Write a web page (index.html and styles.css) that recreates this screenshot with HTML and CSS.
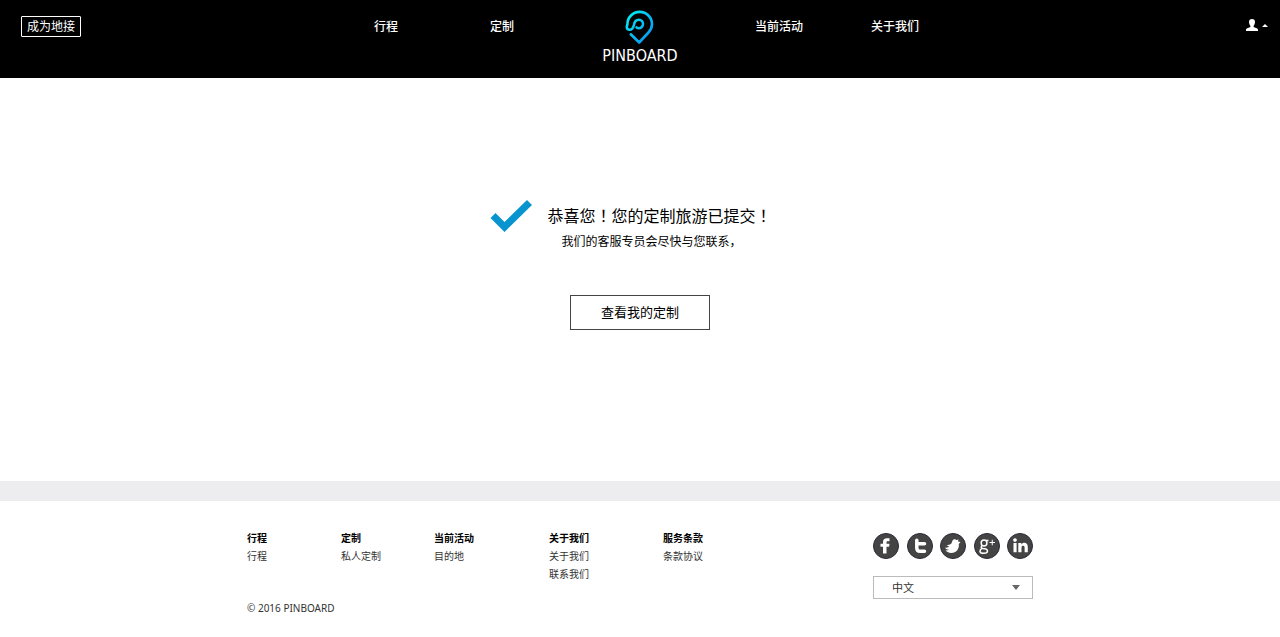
FILE: index.html
```html
<!DOCTYPE html>
<html lang="zh-CN">
<head>
<meta charset="utf-8">
<meta name="viewport" content="width=device-width, initial-scale=1">
<title>PINBOARD</title>
<link rel="stylesheet" href="styles.css">
</head>
<body>
<header class="header">
  <div class="side side-left">
    <button class="guide-button" type="button">成为地接</button>
    <nav class="nav nav-left">
      <a href="#">行程</a>
      <a href="#">定制</a>
    </nav>
  </div>
  <a class="logo" href="#">
    <svg class="logo-pin" viewBox="0 0 30 36" aria-hidden="true">
      <defs>
        <linearGradient id="pin" x1="0" y1="0" x2="1" y2="1">
          <stop offset="0" stop-color="#00f4f4"/>
          <stop offset="1" stop-color="#0a8cf0"/>
        </linearGradient>
      </defs>
      <path d="M5.800 24.300 L14.200 32.500 L23.500 22.500 C26 19.800 27 17.200 27 14.200 A12.300 12.300 0 0 0 2.400 14.200 C2.200 15.500 1.800 16.200 1.800 17 C1.800 19 3 19.800 4.700 19.800 C7.300 19.800 8.200 18 8.900 15 C9.600 11.500 11 9.800 13.800 9.800 A4.200 4.200 0 0 1 13.800 18.200 C12.700 18.200 12 17.900 11.500 17.400" fill="none" stroke="url(#pin)" stroke-width="2.600" stroke-linecap="round" stroke-linejoin="round"/>
    </svg>
    <span class="wordmark">PINBOARD</span>
  </a>
  <div class="side side-right">
    <nav class="nav nav-right">
      <a href="#">当前活动</a>
      <a href="#">关于我们</a>
    </nav>
    <button class="user-button" type="button" aria-label="用户">
      <svg class="user-icon" viewBox="0 0 12 12" aria-hidden="true">
        <path d="M6 0 C8 0 9 1.200 9 3 C9 5 8.200 6 7.600 6.800 V8 C9 8.900 11.400 9.100 12 10.400 V12 H0 V10.400 C.6 9.100 3 8.900 4.400 8 V6.800 C3.800 6 3 5 3 3 C3 1.200 4 0 6 0Z" fill="#fff"/>
      </svg>
      <svg class="caret-up" viewBox="0 0 6 3" aria-hidden="true"><path d="M0 3 L3 0 L6 3Z" fill="#fff"/></svg>
    </button>
  </div>
</header>

<main class="main">
  <section class="message">
    <svg class="check" viewBox="0 0 42 33" aria-hidden="true">
      <path d="M0.500 19 L5.500 14 L14.500 23 L37 1 L42 6 L14.500 33Z" fill="#0894cf"/>
    </svg>
    <div class="message-text">
      <h1>恭喜您<span class="mark" lang="zh-TW">！</span>您的定制旅游已提交<span class="mark" lang="zh-TW">！</span></h1>
      <p>我们的客服专员会尽快与您联系，</p>
    </div>
  </section>
  <button class="view-button" type="button">查看我的定制</button>
</main>

<footer class="footer">
  <div class="footer-inner">
    <div class="links">
      <section><h2>行程</h2><a href="#">行程</a></section>
      <section><h2>定制</h2><a href="#">私人定制</a></section>
      <section><h2>当前活动</h2><a href="#">目的地</a></section>
      <section><h2>关于我们</h2><a href="#">关于我们</a><a href="#">联系我们</a></section>
      <section><h2>服务条款</h2><a href="#">条款协议</a></section>
    </div>
    <div class="connect">
      <div class="social">
        <a href="#" aria-label="Facebook"><svg viewBox="0 0 26 26"><circle cx="13" cy="13" r="12.500"/><path d="M10 20.500 V13.800 H7.500 V10.700 H10 V9 C10 6.300 11.500 5.200 13.800 5.200 H16.500 V8.300 H14.800 C13.800 8.300 13.500 8.700 13.500 9.500 V10.700 H16.500 L16.100 13.800 H13.500 V20.500Z"/></svg></a>
        <a href="#" aria-label="Tumblr"><svg viewBox="0 0 26 26"><circle cx="13" cy="13" r="12.500"/><path d="M9.800 7.300 V15 Q9.800 18.300 13 18.300 H17.500 M9.800 10.800 H17.500" class="stroke"/></svg></a>
        <a href="#" aria-label="Twitter"><svg viewBox="0 0 26 26"><circle cx="13" cy="13" r="12.500"/><path d="M5 14.500 C7 15 8.300 14.300 9 13.500 L6.500 12 C8 12.200 9.500 12 10.800 11 C11.700 10.300 12 9 12.300 8 C13 6.300 15 5.800 16.500 7 L18.500 6.500 L18 8.500 L20.500 9 L18.800 11 C19.500 16 16 20 11.500 20 C8.500 20 6.300 18.500 5.500 17.300 C6.800 17.600 8 17.300 9 16.500 C7.200 16.800 5.500 16 5 14.500Z"/></svg></a>
        <a href="#" aria-label="Google+"><svg viewBox="0 0 26 26"><circle cx="13" cy="13" r="12.500"/><path class="thin" d="M10 7 C8 7 7.200 8.500 7.200 10 C7.200 12 8.300 13 10 13 C11.800 13 12.900 12 12.900 10 C12.900 8.500 12.200 7 10 7Z M12 7.500 H14.500 M8 12.500 C6.700 14 7 15.200 9 15.400 C12 15.600 13.500 16.200 13.500 18 C13.500 19.600 12 20.300 9.800 20.300 C7.500 20.300 6 19.600 6 18.200 C6 17 7 16 8 15.400"/><path class="plus" d="M15.500 9.500 H21 M18.250 6.750 V12.250"/></svg></a>
        <a href="#" aria-label="LinkedIn"><svg viewBox="0 0 26 26"><circle cx="13" cy="13" r="12.500"/><path d="M6.500 10 H9.600 V19.300 H6.500Z M11.300 10 H14.300 V11.400 C15.800 9.100 20.800 9 20.800 13.800 V19.300 H17.600 V14.500 C17.600 12 14.500 12 14.500 14.500 V19.300 H11.300Z M8 5.200 A1.800 1.800 0 1 1 7.990 5.200Z"/></svg></a>
      </div>
      <div class="language">
        <select aria-label="语言"><option>中文</option></select>
        <svg class="caret-down" viewBox="0 0 8 5" aria-hidden="true"><path d="M0 0 H8 L4 5Z" fill="#666"/></svg>
      </div>
    </div>
    <p class="copyright">© 2016 PINBOARD</p>
  </div>
</footer>
</body>
</html>
```

FILE: styles.css
```css
* { box-sizing: border-box; }

body {
  margin: 0;
  min-height: 100vh;
  background: #fff;
  color: #000;
  font-family: "Noto Sans CJK SC", sans-serif;
  font-size: 12px;
  line-height: 18px;
}

h1, h2, p { margin: 0; }
a { color: inherit; text-decoration: none; }
button, select { font: inherit; cursor: pointer; }
svg { display: block; }

.header {
  display: grid;
  grid-template-columns: 1fr 76px 1fr;
  min-height: 78px;
  background: #000;
  color: #fff;
}

.side {
  display: flex;
  justify-content: space-between;
  align-items: flex-start;
  padding-top: 16px;
}

.side-left { padding-left: 21px; }
.side-right { padding-right: 12px; }

.nav {
  display: flex;
  font-weight: 500;
  line-height: 20px;
}

.nav-left { gap: 92px; padding-right: 88px; }
.nav-right { gap: 68px; padding-left: 77px; }

.guide-button {
  width: 60px;
  height: 21px;
  padding: 0 0 2px;
  border: 1px solid #fff;
  border-radius: 1px;
  background: transparent;
  color: #fff;
  font-size: 12px;
  line-height: 16px;
}

.logo {
  display: flex;
  flex-direction: column;
  align-items: center;
  padding-top: 10px;
}

.logo-pin { width: 30px; height: 36px; }

.wordmark {
  font-family: "DejaVu Sans Condensed", "DejaVu Sans", sans-serif;
  font-size: 16px;
  line-height: 20px;
}

.user-button {
  display: flex;
  align-items: center;
  gap: 4px;
  padding: 3px 0;
  border: 0;
  background: transparent;
}

.user-icon { width: 12px; height: 12px; }
.caret-up { width: 6px; height: 3px; }

.main {
  display: flex;
  flex-direction: column;
  align-items: center;
  padding: 121px 0 151px;
}

.message {
  display: flex;
  gap: 15px;
  padding-right: 18px;
}

.check { width: 42px; height: 33px; }
.message-text { padding-top: 4px; }

.message-text h1 {
  font-size: 16px;
  font-weight: 400;
  line-height: 24px;
}

.mark { font-family: "Noto Sans CJK TC", sans-serif; }

.message-text p {
  padding: 5px 0 0 14px;
  line-height: 18px;
}

.view-button {
  width: 140px;
  height: 35px;
  margin-top: 45px;
  padding: 0 0 2px;
  border: 1px solid #444;
  background: #fff;
  color: #000;
  font-size: 13px;
}

.footer {
  border-top: 20px solid #ededef;
  color: #333;
  font-size: 10px;
}

.footer-inner {
  display: grid;
  grid-template-columns: 1fr 160px;
  max-width: 786px;
  margin: 0 auto;
  padding: 28px 0 20px;
}

.links {
  display: grid;
  grid-template-columns: 94px 93px 115px 114px auto;
}

.links h2 {
  color: #000;
  font-size: 10px;
  font-weight: 700;
  line-height: 18px;
}

.links a { display: block; }

.connect { padding-top: 4px; }
.social { display: flex; justify-content: space-between; }
.social svg { width: 26px; height: 26px; }
.social circle { fill: #444; stroke: #2c2838; }
.social path { fill: #fff; }
.social .stroke { fill: none; stroke: #fff; stroke-width: 3.500; stroke-linecap: round; }
.social .thin { fill: none; stroke: #fff; stroke-width: 1.500; }
.social .plus { fill: none; stroke: #fff; stroke-width: 1; }

.language { display: grid; align-items: center; margin-top: 17px; }
.language > * { grid-area: 1 / 1; }

.language select {
  width: 100%;
  height: 23px;
  padding: 0 18px 2px;
  border: 1px solid #bbb;
  border-radius: 0;
  background: #fff;
  color: #333;
  font-size: 11px;
  appearance: none;
}

.caret-down {
  justify-self: end;
  width: 8px;
  height: 5px;
  margin-right: 13px;
  pointer-events: none;
}

.copyright {
  font-family: "Noto Sans", "Noto Sans CJK SC", sans-serif;
}
```
